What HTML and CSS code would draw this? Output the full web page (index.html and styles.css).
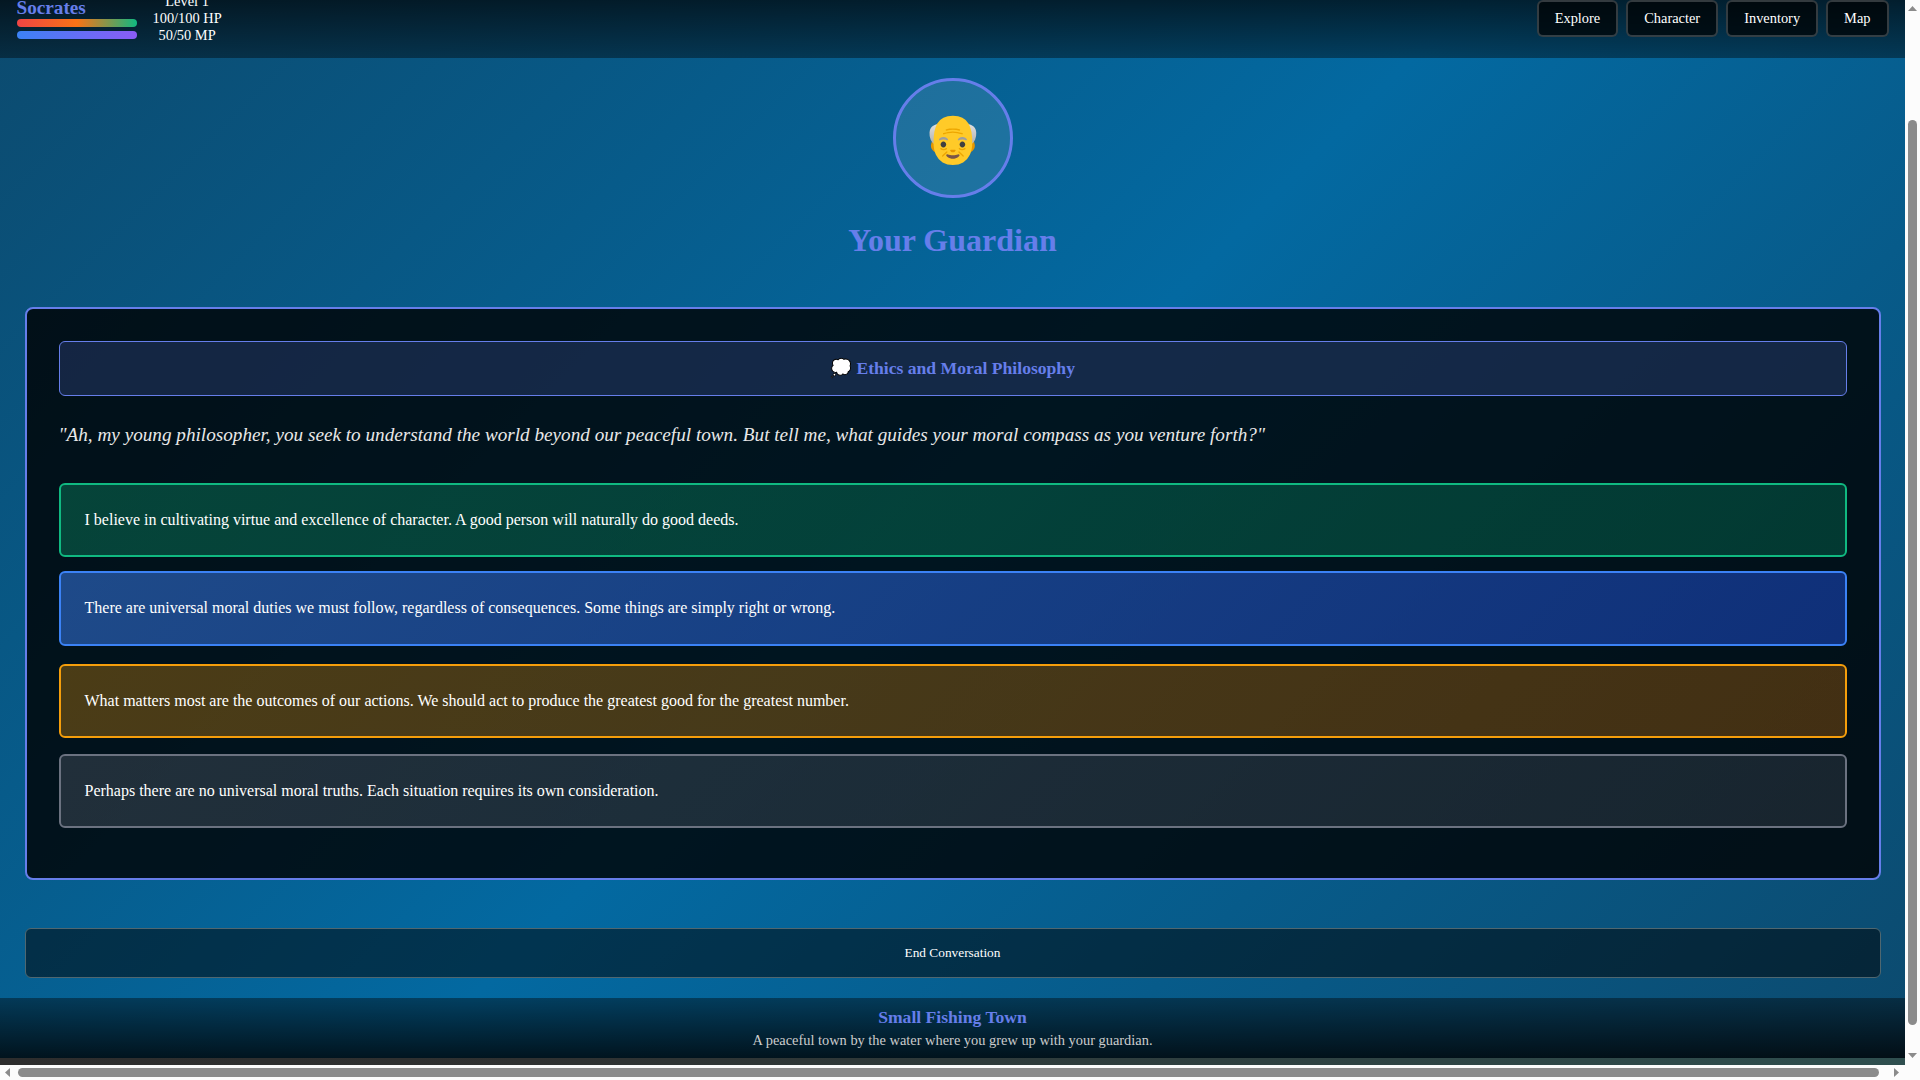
FILE: index.html
```html
<!DOCTYPE html>
<html lang="en">
<head>
<meta charset="utf-8">
<title>Your Guardian</title>
<link rel="stylesheet" href="styles.css">
</head>
<body>
<div class="window">
  <div class="viewport">
    <div class="scene">
      <header class="topbar">
        <div class="player">
          <div class="vitals">
            <div class="player-name">Socrates</div>
            <div class="bar bar-hp"></div>
            <div class="bar bar-mp"></div>
          </div>
          <div class="stats">
            <div>Level 1</div>
            <div>100/100 HP</div>
            <div>50/50 MP</div>
          </div>
        </div>
        <nav class="menu">
          <button class="menu-btn">Explore</button>
          <button class="menu-btn">Character</button>
          <button class="menu-btn">Inventory</button>
          <button class="menu-btn">Map</button>
        </nav>
      </header>
      <main class="conversation">
        <div class="npc">
          <div class="avatar">👴</div>
          <h1 class="npc-name">Your Guardian</h1>
        </div>
        <section class="dialogue">
          <div class="topic">💭 Ethics and Moral Philosophy</div>
          <p class="speech">"Ah, my young philosopher, you seek to understand the world beyond our peaceful town. But tell me, what guides your moral compass as you venture forth?"</p>
          <div class="choices">
            <div class="choice virtue">I believe in cultivating virtue and excellence of character. A good person will naturally do good deeds.</div>
            <div class="choice duty">There are universal moral duties we must follow, regardless of consequences. Some things are simply right or wrong.</div>
            <div class="choice outcome">What matters most are the outcomes of our actions. We should act to produce the greatest good for the greatest number.</div>
            <div class="choice relative">Perhaps there are no universal moral truths. Each situation requires its own consideration.</div>
          </div>
        </section>
        <button class="end-btn">End Conversation</button>
      </main>
      <footer class="location">
        <div class="location-name">Small Fishing Town</div>
        <div class="location-text">A peaceful town by the water where you grew up with your guardian.</div>
      </footer>
    </div>
    <div class="page-edge"></div>
  </div>
  <div class="scroll scroll-v">
    <svg width="9" height="5" viewBox="0 0 9 5"><path d="M4.5 0 9 5H0z"/></svg>
    <div class="thumb"></div>
    <svg width="9" height="5" viewBox="0 0 9 5"><path d="M0 0H9L4.5 5z"/></svg>
  </div>
  <div class="scroll scroll-h">
    <svg width="5" height="9" viewBox="0 0 5 9"><path d="M5 0V9L0 4.5z"/></svg>
    <div class="thumb"></div>
    <svg width="5" height="9" viewBox="0 0 5 9"><path d="M0 0 5 4.5 0 9z"/></svg>
  </div>
  <div class="corner"></div>
</div>
</body>
</html>
```
FILE: styles.css
```css
* { box-sizing: border-box; margin: 0; padding: 0; }

html, body { height: 100%; overflow: hidden; }

body {
  font-family: "Liberation Serif", "Times New Roman", serif;
  font-size: 16px;
  color: #fff;
  background: #2d2d2d;
}

button { font-family: inherit; color: #fff; }

.window {
  display: grid;
  grid-template-columns: 1fr 15px;
  grid-template-rows: 1065px 15px;
  height: 1080px;
}

.viewport { overflow: hidden; min-width: 0; }

.scene {
  display: flex;
  flex-direction: column;
  height: 1080px;
  margin-top: -22px;
  background: linear-gradient(135deg, #0c4a6e 0%, #0369a1 50%, #0c4a6e 100%);
}

.page-edge {
  height: 7px;
  background: linear-gradient(90deg, #2d2d2d 0%, #2f3131 28%, #2f4f4f 100%);
}

/* Top bar */
.topbar {
  flex: none;
  display: flex;
  justify-content: space-between;
  align-items: center;
  height: 80px;
  padding: 0 16.5px;
  background: linear-gradient(180deg, rgba(0, 0, 0, .8), rgba(0, 0, 0, .4));
}

.player { display: flex; align-items: center; gap: 16px; }

.vitals { display: flex; flex-direction: column; width: 120px; }

.player-name {
  line-height: 22px;
  font-size: 19.2px;
  font-weight: bold;
  color: #667eea;
}

.bar { height: 8px; border-radius: 4px; }
.bar-hp { background: linear-gradient(90deg, #ef4444, #f97316, #10b981); }
.bar-mp { margin-top: 4px; background: linear-gradient(90deg, #3b82f6, #8b5cf6); }

.stats { font-size: 14.4px; line-height: 17px; text-align: center; }

.menu { display: flex; gap: 8px; }

.menu-btn {
  padding: 8px 16px;
  font-size: 14.4px;
  line-height: 17px;
  background: rgba(0, 0, 0, .7);
  border: 2px solid rgba(255, 255, 255, .2);
  border-radius: 6px;
}

/* Conversation */
.conversation {
  flex: 1;
  display: flex;
  flex-direction: column;
  padding: 20px 24.5px;
}

.npc { display: flex; flex-direction: column; align-items: center; }

.avatar {
  display: flex;
  align-items: center;
  justify-content: center;
  width: 120px;
  height: 120px;
  font-size: 48px;
  background: rgba(255, 255, 255, .1);
  border: 3px solid #667eea;
  border-radius: 50%;
}

.npc-name { margin-top: 24px; font-size: 32px; line-height: 37px; color: #667eea; }

.dialogue {
  height: 573px;
  margin-top: 48px;
  padding: 32px;
  background: rgba(0, 0, 0, .8);
  border: 2px solid #667eea;
  border-radius: 8px;
}

.topic {
  height: 55px;
  padding: 16px;
  font-size: 17.6px;
  font-weight: bold;
  line-height: 21px;
  text-align: center;
  color: #667eea;
  background: rgba(102, 126, 234, .2);
  border: 1px solid #667eea;
  border-radius: 6px;
}

.speech {
  margin: 24px 0 32px;
  font-size: 19.2px;
  font-style: italic;
  line-height: 1.6;
  color: #e8e8e8;
}

.choices { display: flex; flex-direction: column; gap: 16px; }

.choice {
  padding: 24px;
  line-height: 22.4px;
  border: 2px solid;
  border-radius: 6px;
}

.virtue {
  border-color: #10b981;
  background: linear-gradient(135deg, rgba(16, 185, 129, .3), rgba(5, 150, 105, .3)) border-box;
}

.duty {
  margin: -2px 0 2px;
  border-color: #3b82f6;
  background: linear-gradient(135deg, rgba(59, 130, 246, .5), rgba(29, 78, 216, .5)) border-box;
}

.outcome {
  border-color: #f59e0b;
  background: linear-gradient(135deg, rgba(245, 158, 11, .3), rgba(217, 119, 6, .3)) border-box;
}

.relative {
  border-color: #6b7280;
  background: linear-gradient(135deg, rgba(107, 114, 128, .3), rgba(75, 85, 99, .3)) border-box;
}

.end-btn {
  height: 50px;
  margin-top: auto;
  font-size: 13.333px;
  background: rgba(0, 0, 0, .5);
  border: 1px solid #4f6770;
  border-radius: 6px;
}

/* Location footer */
.location {
  flex: none;
  display: flex;
  flex-direction: column;
  justify-content: center;
  align-items: center;
  gap: 5px;
  height: 60px;
  background: linear-gradient(0deg, rgba(0, 0, 0, .8), rgba(0, 0, 0, .4));
}

.location-name { font-size: 17.6px; font-weight: bold; line-height: 20px; color: #667eea; }
.location-text { font-size: 14.4px; line-height: 17px; color: #ccc; }

/* Scrollbars */
.scroll { display: flex; align-items: center; background: #fcfcfc; }
.scroll svg { flex: none; display: block; fill: #8b8b8b; }
.thumb { background: #8b8b8b; border-radius: 4.5px; }

.scroll-v { flex-direction: column; justify-content: space-between; padding: 6px 0 7px; }
.scroll-v .thumb { width: 9px; height: 905px; margin-top: 81px; }

.scroll-h { justify-content: space-between; padding: 0 6px 0 5px; }
.scroll-h .thumb { width: 1861px; height: 9px; margin-right: 7px; }

.corner { background: #fcfcfc; }
```
